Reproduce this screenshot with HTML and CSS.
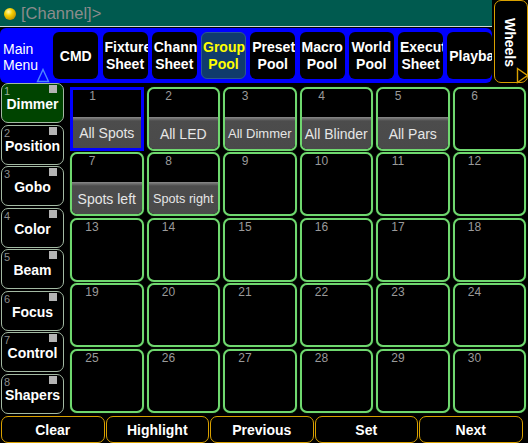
FILE: index.html
```html
<!DOCTYPE html>
<html>
<head>
<meta charset="utf-8">
<link rel="stylesheet" href="styles.css">
</head>
<body>
<div class="screen">
  <div class="top">
    <div class="top-main">
      <div class="cmdline"><span class="ball"></span><span class="prompt">[Channel]&gt;</span></div>
      <div class="toolbar">
        <div class="mainmenu">Main<br>Menu
          <svg class="mm-tri" width="14" height="15" viewBox="0 0 14 15"><polygon points="7,1.5 12.5,13.5 1.5,13.5" fill="none" stroke="#4f86ff" stroke-width="1.4"/></svg>
        </div>
        <div class="tb"><span>CMD</span></div>
        <div class="tb"><span>Fixture<br>Sheet</span></div>
        <div class="tb"><span>Channel<br>Sheet</span></div>
        <div class="tb active"><span>Group<br>Pool</span></div>
        <div class="tb"><span>Preset<br>Pool</span></div>
        <div class="tb"><span>Macro<br>Pool</span></div>
        <div class="tb"><span>World<br>Pool</span></div>
        <div class="tb"><span>Executor<br>Sheet</span></div>
        <div class="tb"><span>Playback</span></div>
      </div>
    </div>
    <div class="wheels">
      <span class="wheels-text">Wheels</span>
      <svg class="wh-tri" width="12" height="17" viewBox="0 0 12 17"><polygon points="1.5,1.5 11.5,8.5 1.5,15.5" fill="none" stroke="#d9a000" stroke-width="1.4"/></svg>
    </div>
  </div>
  <div class="main">
    <div class="side">
      <div class="sbtn on"><span class="snum">1</span><span class="sq"></span>Dimmer</div>
      <div class="sbtn"><span class="snum">2</span><span class="sq"></span>Position</div>
      <div class="sbtn"><span class="snum">3</span><span class="sq"></span>Gobo</div>
      <div class="sbtn"><span class="snum">4</span><span class="sq"></span>Color</div>
      <div class="sbtn"><span class="snum">5</span><span class="sq"></span>Beam</div>
      <div class="sbtn"><span class="snum">6</span><span class="sq"></span>Focus</div>
      <div class="sbtn"><span class="snum">7</span><span class="sq"></span>Control</div>
      <div class="sbtn"><span class="snum">8</span><span class="sq"></span>Shapers</div>
    </div>
    <div class="grid">
      <div class="cell sel"><div class="num">1</div><div class="lbl">All Spots</div></div>
      <div class="cell"><div class="num">2</div><div class="lbl">All LED</div></div>
      <div class="cell"><div class="num">3</div><div class="lbl sm">All Dimmer</div></div>
      <div class="cell"><div class="num">4</div><div class="lbl">All Blinder</div></div>
      <div class="cell"><div class="num">5</div><div class="lbl">All Pars</div></div>
      <div class="cell"><div class="num">6</div></div>
      <div class="cell"><div class="num">7</div><div class="lbl">Spots left</div></div>
      <div class="cell"><div class="num">8</div><div class="lbl xs">Spots right</div></div>
      <div class="cell"><div class="num">9</div></div>
      <div class="cell"><div class="num">10</div></div>
      <div class="cell"><div class="num">11</div></div>
      <div class="cell"><div class="num">12</div></div>
      <div class="cell"><div class="num">13</div></div>
      <div class="cell"><div class="num">14</div></div>
      <div class="cell"><div class="num">15</div></div>
      <div class="cell"><div class="num">16</div></div>
      <div class="cell"><div class="num">17</div></div>
      <div class="cell"><div class="num">18</div></div>
      <div class="cell"><div class="num">19</div></div>
      <div class="cell"><div class="num">20</div></div>
      <div class="cell"><div class="num">21</div></div>
      <div class="cell"><div class="num">22</div></div>
      <div class="cell"><div class="num">23</div></div>
      <div class="cell"><div class="num">24</div></div>
      <div class="cell"><div class="num">25</div></div>
      <div class="cell"><div class="num">26</div></div>
      <div class="cell"><div class="num">27</div></div>
      <div class="cell"><div class="num">28</div></div>
      <div class="cell"><div class="num">29</div></div>
      <div class="cell"><div class="num">30</div></div>
    </div>
  </div>
  <div class="bottom">
    <div class="bbtn">Clear</div>
    <div class="bbtn">Highlight</div>
    <div class="bbtn">Previous</div>
    <div class="bbtn">Set</div>
    <div class="bbtn">Next</div>
  </div>
</div>
</body>
</html>
```
FILE: styles.css
```css
* { box-sizing: border-box; }
html, body { margin: 0; padding: 0; background: #000; }
body { font-family: "Liberation Sans", Arial, sans-serif; color: #fff; }
.screen { width: 528px; height: 443px; overflow: hidden; background: #000; }

.top { display: flex; height: 83px; }
.top-main { width: 494px; display: flex; flex-direction: column; }
.cmdline {
  height: 27px; background: #005a4f; border-bottom: 1px solid #d0d8d4;
  display: flex; align-items: center; margin-bottom: 1px;
}
.ball {
  width: 12px; height: 12px; border-radius: 50%; margin-left: 4px; margin-top: 1px;
  background: radial-gradient(circle at 38% 32%, #fffbb0 0, #f5d000 35%, #c89a00 70%, #7a5a00 100%);
}
.prompt { margin-left: 5px; font-size: 16.5px; color: #8c8c8c; line-height: 18px; }

.toolbar {
  position: relative; height: 55px; background: #0000ff; border-radius: 6px;
  display: flex; align-items: center; gap: 4.25px;
}
.mainmenu { width: 49px; padding-left: 3px; font-size: 14px; line-height: 16px; color: #fff; margin-top: 2px; }
.mm-tri { position: absolute; left: 36px; top: 40px; }
.tb {
  width: 45px; height: 47px; background: #000; border-radius: 6px; overflow: hidden;
  display: flex; align-items: center; padding: 1px 2px 0;
  font-weight: bold; font-size: 14px; line-height: 17px; color: #fff;
}
.tb span { display: block; width: 100%; text-align: center; white-space: nowrap; }
.tb.active { background: #103b6d; border: 1px solid #2b5890; color: #ffff00; padding: 0 1px; }

.wheels {
  position: relative; margin-left: 2px; width: 36px; height: 83px;
  border: 1px solid #d9a000; border-radius: 7px; background: #000;
  display: flex; justify-content: flex-start; padding-left: 7px; padding-top: 17px;
}
.wheels-text { writing-mode: vertical-rl; font-weight: bold; font-size: 14px; line-height: 16px; }
.wh-tri { position: absolute; left: 21px; top: 66px; }

.main { display: flex; height: 333px; }
.side { width: 64px; padding-left: 1px; display: flex; flex-direction: column; gap: 1.57px; }
.sbtn {
  position: relative; height: 40px; border: 1px solid #a3b9a3; border-radius: 7px;
  display: flex; align-items: center; justify-content: center;
  font-weight: bold; font-size: 14px; color: #fff; padding-top: 2px;
}
.sbtn.on { background: #004400; }
.snum { position: absolute; left: 2px; top: 1px; font-size: 11px; line-height: 12px; color: #8c8c8c; font-weight: normal; }
.sbtn.on .snum { color: #9ab09a; }
.sq { position: absolute; right: 6px; top: 1px; width: 8px; height: 8px; background: #b4b4b4; }

.grid {
  margin-left: 6px; margin-top: 4px;
  display: grid; grid-template-columns: repeat(6, 73.5px); grid-template-rows: repeat(5, 63.8px);
  column-gap: 3px; row-gap: 1.7px; align-self: flex-start;
}
.cell {
  border: 2px solid #6fd86f; border-radius: 7px; background: #000;
  display: flex; flex-direction: column; overflow: hidden;
  box-shadow: 0 0 1px #2f7a2f;
}
.cell.sel { border: 3px solid #0000ff; border-radius: 0; box-shadow: none; }
.num { height: 28px; width: 40px; text-align: center; font-size: 12px; line-height: 13px; color: #9a9a9a; padding-top: 1px; flex: none; }
.cell.sel .num { height: 27px; width: 39px; padding-top: 0; }
.lbl {
  flex: 1; display: flex; align-items: center; justify-content: center; white-space: nowrap;
  background: linear-gradient(#8a8a8a 0, #6a6a6a 2px, #4c4c4c 4px, #4a4a4a 100%);
  font-size: 14px; color: #e6e6e6; padding-top: 2px;
}
.lbl.sm { font-size: 13px; }
.lbl.xs { font-size: 12.7px; }

.bottom { display: flex; gap: 1px; padding-left: 1px; padding-top: 0; }
.bbtn {
  width: 103.5px; height: 27px; border: 1px solid #d9a000; border-radius: 7px;
  display: flex; align-items: center; justify-content: center;
  font-weight: bold; font-size: 14px; color: #fff; padding-top: 0;
}
```
